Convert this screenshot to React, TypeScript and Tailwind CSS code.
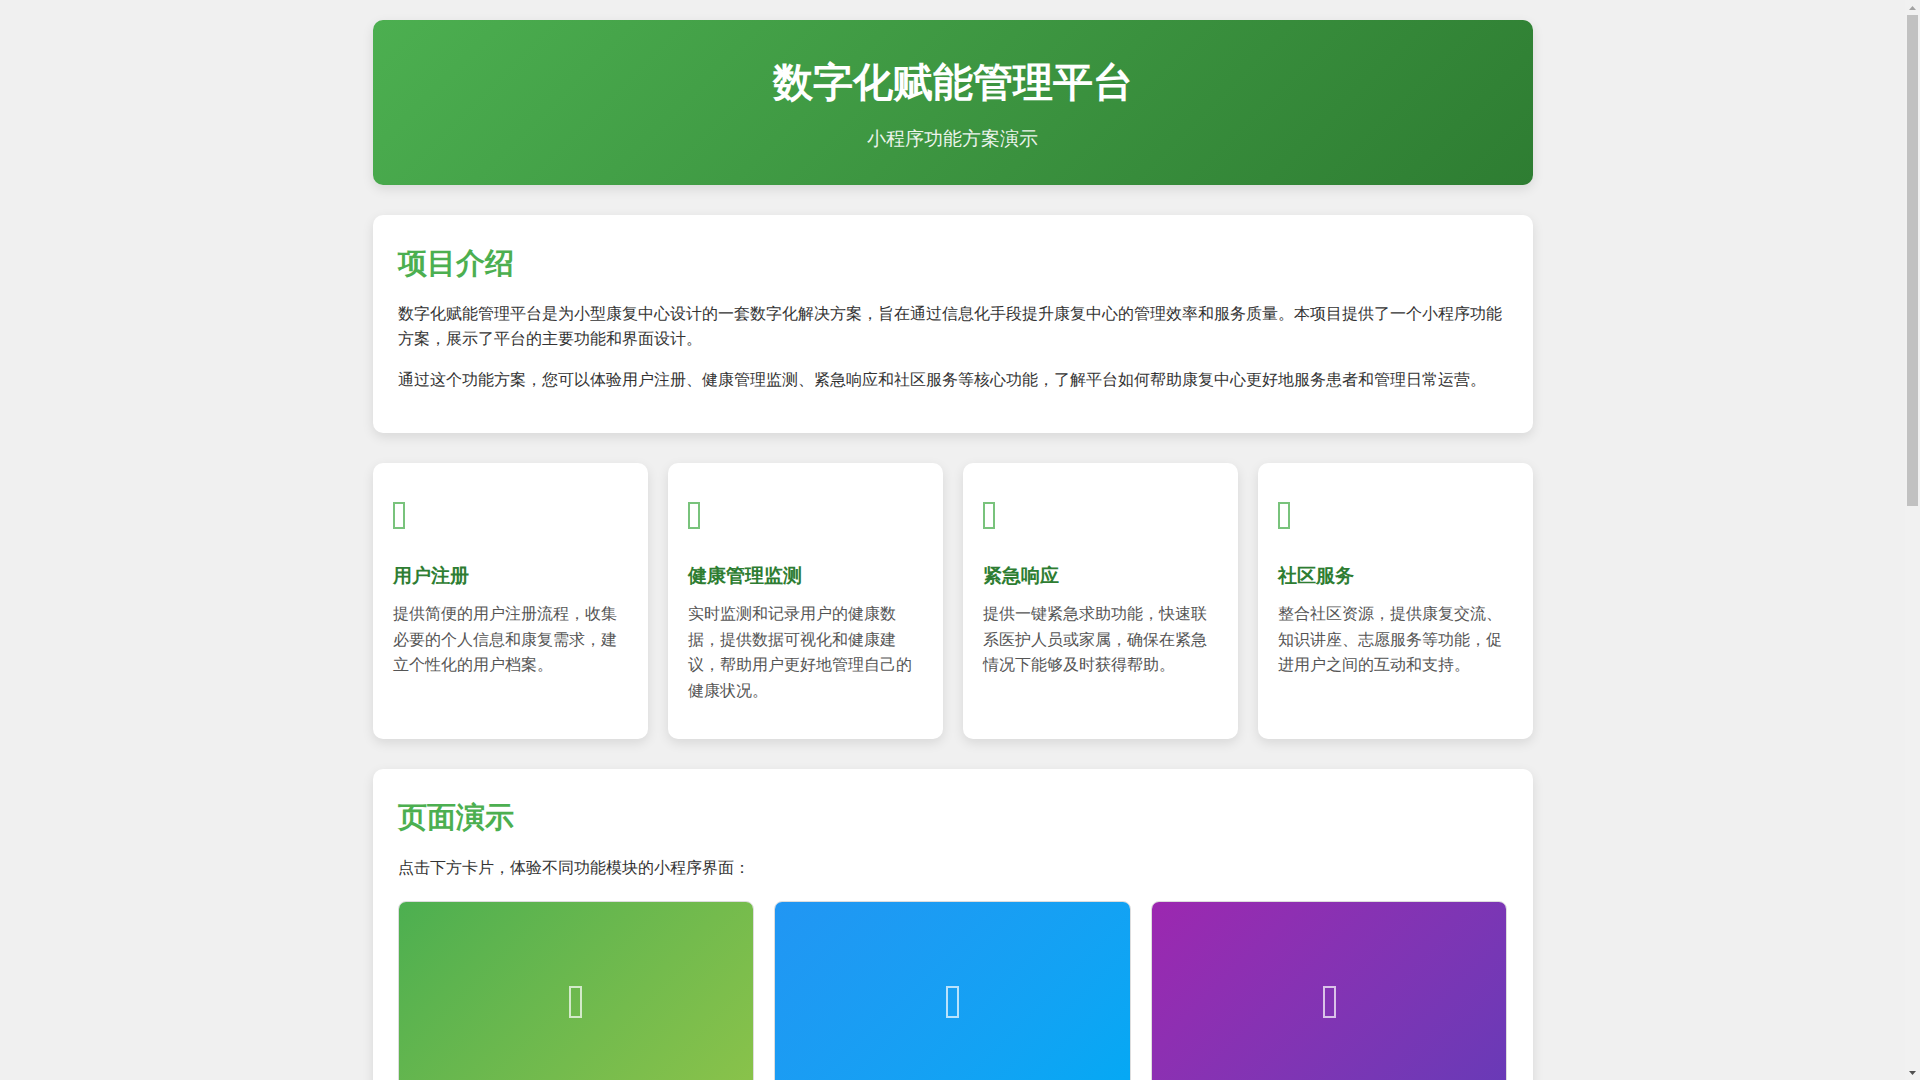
import React from 'react';

const FEATURES = [
  {
    title: '用户注册',
    text: '提供简便的用户注册流程，收集必要的个人信息和康复需求，建立个性化的用户档案。',
  },
  {
    title: '健康管理监测',
    text: '实时监测和记录用户的健康数据，提供数据可视化和健康建议，帮助用户更好地管理自己的健康状况。',
  },
  {
    title: '紧急响应',
    text: '提供一键紧急求助功能，快速联系医护人员或家属，确保在紧急情况下能够及时获得帮助。',
  },
  {
    title: '社区服务',
    text: '整合社区资源，提供康复交流、知识讲座、志愿服务等功能，促进用户之间的互动和支持。',
  },
];

const DEMOS = [
  'bg-linear-135 from-[#4caf50] to-[#8bc34a]',
  'bg-linear-135 from-[#2196f3] to-[#03a9f4]',
  'bg-linear-135 from-[#9c27b0] to-[#673ab7]',
];

const cardClass = 'rounded-[10px] bg-white shadow-[0_4px_12px_rgba(0,0,0,0.1)]';

function Scrollbar() {
  return (
    <aside className="flex h-screen w-[15px] shrink-0 flex-col bg-[#f1f1f1]">
      <div className="flex h-[15px] shrink-0 items-center justify-center">
        <svg width="7" height="4" viewBox="0 0 7 4">
          <path d="M3.5 0 7 4H0z" fill="#a3a3a3" />
        </svg>
      </div>
      <div className="flex-1">
        <div className="mx-auto h-[491px] w-[11px] bg-[#c1c1c1]" />
      </div>
      <div className="flex h-[15px] shrink-0 items-center justify-center">
        <svg width="7" height="4" viewBox="0 0 7 4">
          <path d="M0 0h7L3.5 4z" fill="#505050" />
        </svg>
      </div>
    </aside>
  );
}

export default function App() {
  return (
    <div className="flex h-screen overflow-hidden bg-[#f0f0f0] font-['Liberation_Sans',sans-serif] text-base leading-[1.6] text-[#333]">
      <main className="min-w-0 flex-1">
        <div className="mx-auto max-w-[1200px] p-5">
          <header className="mb-[30px] rounded-[10px] bg-linear-135 from-[#4caf50] to-[#2e7d32] p-[30px] text-center text-white shadow-[0_4px_12px_rgba(0,0,0,0.1)]">
            <h1 className="mb-2.5 text-[40px] leading-[1.6] font-bold">数字化赋能管理平台</h1>
            <p className="text-[19.2px] opacity-90">小程序功能方案演示</p>
          </header>

          <section className={`mb-[30px] p-[25px] ${cardClass}`}>
            <h2 className="mb-[15px] text-[28.8px] leading-[1.6] font-bold text-[#4caf50]">项目介绍</h2>
            <p className="mb-[15px]">
              数字化赋能管理平台是为小型康复中心设计的一套数字化解决方案，旨在通过信息化手段提升康复中心的管理效率和服务质量。本项目提供了一个小程序功能方案，展示了平台的主要功能和界面设计。
            </p>
            <p className="mb-[15px]">
              通过这个功能方案，您可以体验用户注册、健康管理监测、紧急响应和社区服务等核心功能，了解平台如何帮助康复中心更好地服务患者和管理日常运营。
            </p>
          </section>

          <div className="mb-[30px] grid grid-cols-4 gap-5">
            {FEATURES.map((f) => (
              <div key={f.title} className={`p-5 ${cardClass}`}>
                {/* the icon font never loaded, so the page shows its missing-glyph box */}
                <div className="mb-[15px] h-[63px] pt-[19px]">
                  <span className="block h-[27px] w-[12px] border-2 border-[#4caf50]/75" />
                </div>
                <h3 className="mb-2.5 text-[19.2px] leading-[1.6] font-bold text-[#2e7d32]">{f.title}</h3>
                <p className="mb-[15px] text-[#555]">{f.text}</p>
              </div>
            ))}
          </div>

          <section className={`p-[25px] ${cardClass}`}>
            <h2 className="mb-[15px] text-[28.8px] leading-[1.6] font-bold text-[#4caf50]">页面演示</h2>
            <p className="mb-[21px]">点击下方卡片，体验不同功能模块的小程序界面：</p>
            <div className="grid grid-cols-3 gap-5">
              {DEMOS.map((demo) => (
                <div key={demo} className="overflow-hidden rounded-lg border border-[#ddd]">
                  <div className={`flex h-[200px] items-center justify-center ${demo}`}>
                    <span className="block h-[32px] w-[13px] border-2 border-white/70" />
                  </div>
                </div>
              ))}
            </div>
          </section>
        </div>
      </main>
      <Scrollbar />
    </div>
  );
}
